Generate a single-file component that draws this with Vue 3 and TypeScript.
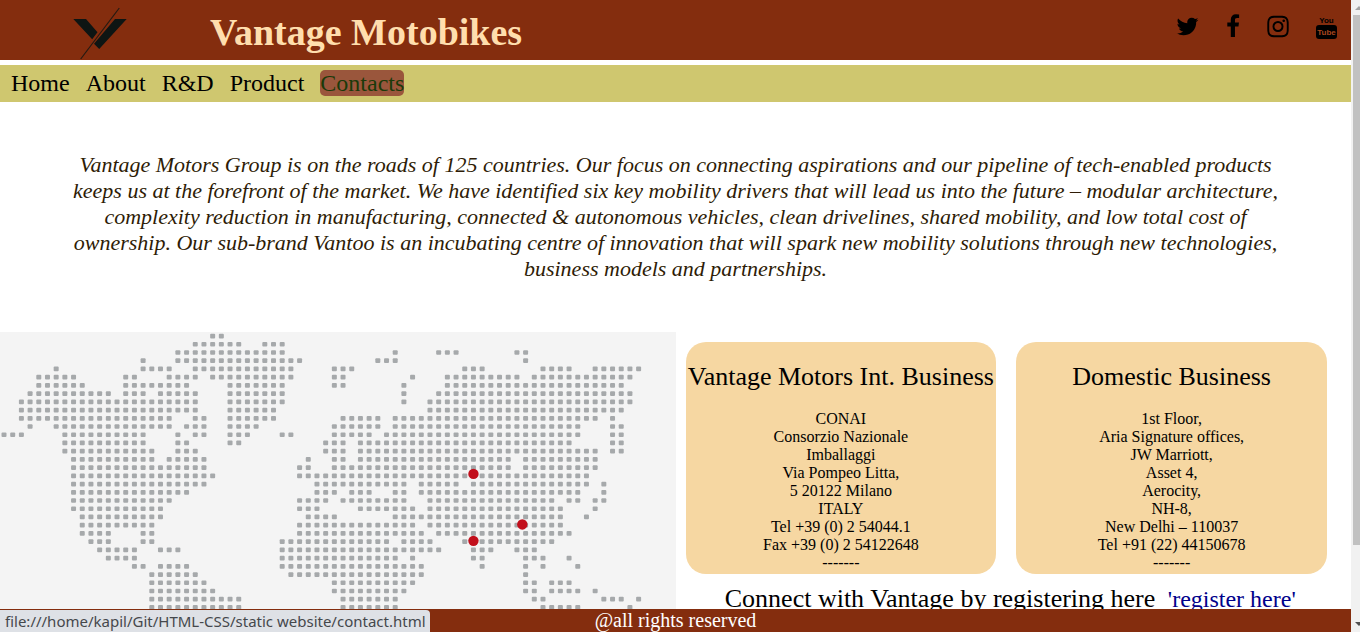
<script setup lang="ts">
interface Card {
  title: string
  lines: string[]
}

const navItems = [
  { label: 'Home', active: false },
  { label: 'About', active: false },
  { label: 'R&D', active: false },
  { label: 'Product', active: false },
  { label: 'Contacts', active: true },
]

const socials = [
  {
    name: 'Twitter',
    width: 23,
    box: '64 0 1664 1792',
    path: 'M1684 408q-67 98-162 167 1 14 1 42 0 130-38 259.5t-115.5 248.5-184.5 210.5-258 146-323 54.5q-271 0-496-145 35 4 78 4 225 0 401-138-105-2-188-64.5t-114-159.5q33 5 61 5 43 0 85-11-112-23-185.5-111.5t-73.5-205.5v-4q68 38 146 41-66-44-105-115t-39-154q0-88 44-163 121 149 294.5 238.5t371.5 99.5q-8-38-8-74 0-134 94.5-228.5t228.5-94.5q140 0 236 102 109-21 205-78-37 115-142 178 93-10 186-50z',
  },
  {
    name: 'Facebook',
    width: 14,
    box: '384 0 1024 1792',
    path: 'M1343 12v264h-157q-86 0-116 36t-30 108v189h293l-39 296h-254v759h-306v-759h-255v-296h255v-218q0-186 104-288.5t277-102.5q147 0 228 12z',
  },
  {
    name: 'Instagram',
    width: 22,
    box: '128 0 1536 1792',
    path: 'M1152 896q0-106-75-181t-181-75-181 75-75 181 75 181 181 75 181-75 75-181zm138 0q0 164-115 279t-279 115-279-115-115-279 115-279 279-115 279 115 115 279zm108-410q0 38-27 65t-65 27-65-27-27-65 27-65 65-27 65 27 27 65zm-502-220q-7 0-76.5-.5t-105.5 0-96.5 3-103 10-71.5 18.5q-50 20-88 58t-58 88q-11 29-18.5 71.5t-10 103-3 96.5 0 105.5.5 76.5-.5 76.5 0 105.5 3 96.5 10 103 18.5 71.5q20 50 58 88t88 58q29 11 71.5 18.5t103 10 96.5 3 105.5 0 76.5-.5 76.5.5 105.5 0 96.5-3 103-10 71.5-18.5q50-20 88-58t58-88q11-29 18.5-71.5t10-103 3-96.5 0-105.5-.5-76.5.5-76.5 0-105.5-3-96.5-10-103-18.5-71.5q-20-50-58-88t-88-58q-29-11-71.5-18.5t-103-10-96.5-3-105.5 0-76.5.5zm768 630q0 229-5 317-10 208-124 322t-322 124q-88 5-317 5t-317-5q-208-10-322-124t-124-322q-5-88-5-317t5-317q10-208 124-322t322-124q88-5 317-5t317 5q208 10 322 124t124 322q5 88 5 317z',
  },
]

const cards: Card[] = [
  {
    title: 'Vantage Motors Int. Business',
    lines: [
      'CONAI',
      'Consorzio Nazionale',
      'Imballaggi',
      'Via Pompeo Litta,',
      '5 20122 Milano',
      'ITALY',
      'Tel +39 (0) 2 54044.1',
      'Fax +39 (0) 2 54122648',
      '-------',
    ],
  },
  {
    title: 'Domestic Business',
    lines: [
      '1st Floor,',
      'Aria Signature offices,',
      'JW Marriott,',
      'Asset 4,',
      'Aerocity,',
      'NH-8,',
      'New Delhi – 110037',
      'Tel +91 (22) 44150678',
      '-------',
    ],
  },
]

// Column ranges of the land dots, one entry per row of the map from north to south.
const mapRows: string[] = [
  '24-25',
  '22-27 30-32',
  '20-32 45 50-52 59-60',
  '16 20-34 43-45 60',
  '6 16-19 22-33 38-40 53-55 62-65 68-73',
  '4-8 14-15 19-22 24-33 38-39 47 51-59 61-72',
  '4-9 14-21 26-32 38-39 46 51-71',
  '3-12 14-16 18-22 26-32 46 50-72',
  '2-22 26-32 46 49-72',
  '2-22 26-31 49-71',
  '2-19 22-23 26-31 39-43 45-68 70',
  '3 6-19 21-23 26-29 38-43 45-66 70-71',
  '0-2 7-16 20 22-23 26-28 32-33 38-42 44-66 70-71',
  '7-16 20-21 26-27 37-39 41-65 70-71',
  '7-17 20-22 37-39 41-68 70-71',
  '8-17 19-23 35 38-39 41-58 60-68',
  '8-23 34-35 38-58 60-68',
  '8-24 34-67',
  '8-23 36-46 48-52 54-67 69',
  '8-21 36-38 40-42 45-46 48-66 69',
  '8-19 34-37 39-46 49-63 65-66 68-69',
  '8-18 34-36 41-47 49-64 68',
  '9-18 35-38 45-64 67',
  '9-17 34-47 49-64',
  '9-12 16-17 34-48 50-65',
  '10-12 16-17 32-44 46-49 53-63',
  '11-15 18-20 32-50 54-56 59-61',
  '12-15 32-45 47 54-55 60-62 65',
  '15-16 18-21 32-48 55 60 62 66',
  '17-22 33-48 60',
  '17-23 38-47 60-61 63-65',
  '17-24 38-46 60-61 63-66 68',
  '17-27 39-45 61-62 69-71 73',
  '17-27 39-45 62-66 72',
]

const dots = mapRows.flatMap((row, r) =>
  row.split(' ').flatMap((range) => {
    const [from, to = from] = range.split('-').map(Number)
    return Array.from({ length: to - from + 1 }, (_, i) => ({
      x: 4 + 8.7 * (from + i) - 2.5,
      y: 4 + 8.23 * r - 2.3,
    }))
  }),
)

const markers = [
  { x: 473.8, y: 142 },
  { x: 522.7, y: 192.6 },
  { x: 473.8, y: 209 },
]
</script>

<template>
  <div class="window">
    <div class="page">
      <div class="content">
        <header class="header">
          <svg class="logo" viewBox="0 0 60 60" aria-hidden="true">
            <path d="M3.300 19H16L27.500 32.300L22.200 39.300Z M45 19H56.700L29.200 49L24 43.700Z" fill="#0e1513" />
            <path d="M49.300 8L10.700 59" fill="none" stroke="#241a12" stroke-width="1.200" />
          </svg>
          <h1 class="title">Vantage Motobikes</h1>
          <div class="socials">
            <a v-for="s in socials" :key="s.name" href="#" :aria-label="s.name">
              <svg :width="s.width" height="25" :viewBox="s.box"><path :d="s.path" /></svg>
            </a>
            <a href="#" aria-label="YouTube">
              <svg width="21" height="25" viewBox="0 0 21 25">
                <text class="yt" x="10.500" y="9" text-anchor="middle">You</text>
                <rect x="0" y="11" width="21" height="14" rx="3" />
                <text class="yt cut" x="10.500" y="21" text-anchor="middle">Tube</text>
              </svg>
            </a>
          </div>
        </header>

        <nav class="nav">
          <a v-for="n in navItems" :key="n.label" href="#" :class="{ active: n.active }">{{ n.label }}</a>
        </nav>

        <p class="intro">
          Vantage Motors Group is on the roads of 125 countries. Our focus on connecting aspirations and our pipeline of
          tech-enabled products keeps us at the forefront of the market. We have identified six key mobility drivers
          that will lead us into the future – modular architecture, complexity reduction in manufacturing, connected
          &amp; autonomous vehicles, clean drivelines, shared mobility, and low total cost of ownership. Our sub-brand
          Vantoo is an incubating centre of innovation that will spark new mobility solutions through new technologies,
          business models and partnerships.
        </p>

        <section class="contact">
          <div class="map">
            <svg viewBox="0 0 676 280" role="img" aria-label="World map">
              <rect v-for="(d, i) in dots" :key="i" :x="d.x" :y="d.y" width="5" height="4.700" rx="1" fill="#a6a9ab" />
              <circle v-for="(m, i) in markers" :key="'m' + i" :cx="m.x" :cy="m.y" r="5.200" fill="#c20f1c" />
            </svg>
          </div>
          <div class="details">
            <div class="cards">
              <article v-for="c in cards" :key="c.title" class="card">
                <h2>{{ c.title }}</h2>
                <address><span v-for="l in c.lines" :key="l">{{ l }}</span></address>
              </article>
            </div>
            <p class="connect">Connect with Vantage by registering here <a href="#">'register here'</a></p>
          </div>
        </section>
      </div>
      <footer class="footer">@all rights reserved</footer>
      <div class="status">file:///home/kapil/Git/HTML-CSS/static website/contact.html</div>
    </div>
    <div class="scrollbar" aria-hidden="true">
      <svg width="15" height="15" viewBox="0 0 15 15"><path d="M4 10L8 6L12 10Z" fill="#a3a3a3" /></svg>
      <div class="track"><div class="thumb"></div></div>
      <svg width="15" height="15" viewBox="0 0 15 15"><path d="M4 5H12L8 9Z" fill="#505050" /></svg>
    </div>
  </div>
</template>

<style>
body {
  margin: 0;
}
</style>

<style scoped>
.window {
  display: flex;
  height: 100vh;
  overflow: hidden;
  background: #fff;
  color: #000;
  font-family: 'Liberation Serif', 'Times New Roman', serif;
}
.page {
  position: relative;
  flex: 1;
  min-width: 0;
  display: flex;
  flex-direction: column;
}
.content {
  flex: 1;
  min-height: 0;
  overflow: hidden;
}
.header {
  display: flex;
  align-items: center;
  height: 60px;
  padding: 0 14px 0 70px;
  background: #842d0e;
}
.logo {
  width: 60px;
  height: 60px;
}
.title {
  flex: 1;
  margin: 4px 0 0 80px;
  color: #ffdead;
  font-size: 38px;
  line-height: 44px;
}
.socials {
  display: flex;
  gap: 27px;
  margin-bottom: 7px;
}
.socials svg {
  display: block;
}
.yt {
  font: bold 8px 'Liberation Sans Narrow', 'Liberation Sans', sans-serif;
}
.cut {
  fill: #a8461f;
}
.nav {
  display: flex;
  gap: 16px;
  margin-top: 5px;
  padding: 5px 11px 6px;
  background: #cfc76f;
}
.nav a {
  color: #000;
  font-size: 24px;
  line-height: 26px;
  text-decoration: none;
  border-radius: 5px;
}
.nav .active {
  background: #9a563c;
  color: #1a3a0a;
}
.intro {
  margin: 50px 70px;
  color: #2e1c06;
  font-size: 22px;
  font-style: italic;
  line-height: 26px;
  text-align: center;
}
.contact {
  display: flex;
  align-items: stretch;
}
.map {
  flex: 1;
  min-width: 0;
  background: #f4f4f4;
}
.map svg {
  display: block;
  width: 100%;
}
.details {
  flex: 1;
  min-width: 0;
}
.cards {
  display: flex;
  gap: 20px;
  padding: 10px 24px 10px 10px;
}
.card {
  flex: 1;
  min-width: 0;
  height: 232px;
  border-radius: 20px;
  background: #f6d7a2;
  text-align: center;
}
.card h2 {
  margin: 20px 0 18px;
  font-size: 26px;
  font-weight: 400;
  line-height: 30px;
  white-space: nowrap;
}
.card address {
  font-size: 16px;
  font-style: normal;
  line-height: 18px;
}
.card span {
  display: block;
}
.connect {
  margin: 0 6px 0 0;
  font-size: 26px;
  line-height: 30px;
  text-align: center;
}
.connect a {
  margin-left: 6px;
  color: #00008b;
  font-size: 24px;
  text-decoration: none;
}
.footer {
  background: #842d0e;
  color: #fff;
  font-size: 20px;
  line-height: 23px;
  text-align: center;
}
.status {
  position: absolute;
  left: 0;
  bottom: 0;
  padding: 0 4px 0 5px;
  border-radius: 0 4px 0 0;
  background: #dee1e6;
  color: #45484c;
  font-family: 'Noto Sans', 'Open Sans', sans-serif;
  font-size: 15px;
  line-height: 22px;
  white-space: nowrap;
}
.scrollbar {
  display: flex;
  flex-direction: column;
  width: 9px;
  overflow: hidden;
  background: #f1f1f1;
}
.track {
  flex: 1;
}
.thumb {
  height: 88%;
  margin-left: 2px;
  background: #c1c1c1;
}
</style>
